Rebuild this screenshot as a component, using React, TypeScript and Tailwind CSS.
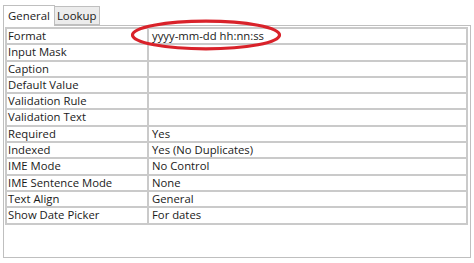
import React from "react"

const rows: [string, string][] = [
  ["Format", "yyyy-mm-dd hh:nn:ss"],
  ["Input Mask", ""],
  ["Caption", ""],
  ["Default Value", ""],
  ["Validation Rule", ""],
  ["Validation Text", ""],
  ["Required", "Yes"],
  ["Indexed", "Yes (No Duplicates)"],
  ["IME Mode", "No Control"],
  ["IME Sentence Mode", "None"],
  ["Text Align", "General"],
  ["Show Date Picker", "For dates"],
]

export default function App() {
  return (
    <div
      className="relative w-[474px] h-[263px] bg-white text-[11.3px] text-[#1a1a1a] overflow-hidden"
      style={{ fontFamily: '"Open Sans", "Noto Sans", sans-serif' }}
    >
      {/* tabs */}
      <div className="flex items-end pt-[4px] pl-[3px] h-[25px] text-[11.4px]">
        <div className="h-[21px] px-[4px] bg-white border border-b-0 border-[#bfbfbf] leading-[19px] relative z-10 -mb-px">
          General
        </div>
        <div className="h-[19px] px-[2px] bg-[#ececec] border border-l-0 border-[#bfbfbf] leading-[17px]">
          Lookup
        </div>
      </div>

      {/* panel */}
      <div className="ml-[3px] w-[468px] h-[233px] border border-[#bfbfbf] p-[1px]">
        <div className="w-[463px] border-2 border-[#cacaca] border-b-0">
          {rows.map(([k, v]) => (
            <div key={k} className="flex h-[16.3px] border-b-2 border-[#cacaca]">
              <div className="w-[142px] shrink-0 border-r-2 border-[#cacaca] pl-[1px] leading-[14px] whitespace-nowrap">
                {k}
              </div>
              <div className="flex-1 pl-[3px] leading-[14px] whitespace-nowrap">{v}</div>
            </div>
          ))}
        </div>
      </div>

      {/* red ellipse annotation */}
      <svg className="absolute left-[128px] top-[18px]" width="156" height="34" viewBox="0 0 156 34">
        <ellipse cx="78" cy="17" rx="73.5" ry="13.8" fill="none" stroke="#d9222a" strokeWidth="3.2" />
      </svg>
    </div>
  )
}
